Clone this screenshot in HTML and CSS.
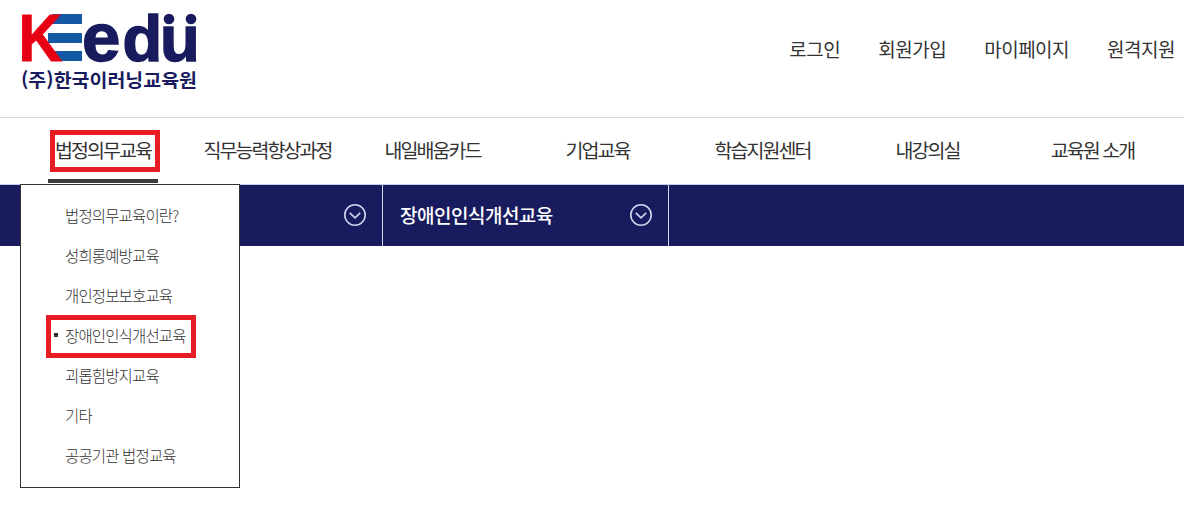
FILE: index.html
```html
<!DOCTYPE html>
<html lang="ko">
<head>
    <meta charset="UTF-8">
    <meta name="viewport" content="width=device-width, initial-scale=1.0">
    <title>(주)한국이러닝교육원</title>
    <link rel="stylesheet" href="styles.css">
</head>
<body>
    <!-- Header -->
    <header class="page-header">
        <a class="logo" href="#">
            <svg width="180" height="104" viewBox="0 -10 180 104">
                <g fill="#1558a6">
                    <rect x="31" y="4" width="30" height="10"/>
                    <rect x="27" y="23" width="34" height="10"/>
                    <rect x="34" y="41" width="27" height="10"/>
                </g>
                <text class="logo-k" transform="translate(-2.6 51) scale(0.9 1)" x="0" y="0">K</text>
                <text class="logo-edu" x="61 101.5 139" y="51"><tspan class="logo-e">e</tspan>du</text>
                <g fill="#181c5e">
                    <circle cx="148" cy="9" r="5.3"/>
                    <circle cx="170" cy="9" r="5.3"/>
                </g>
                <text class="logo-name" x="0" y="77" textLength="176" lengthAdjust="spacingAndGlyphs">(주)한국이러닝교육원</text>
            </svg>
        </a>
        <ul class="user-menu">
            <li><a href="#">로그인</a></li>
            <li><a href="#">회원가입</a></li>
            <li><a href="#">마이페이지</a></li>
            <li><a href="#">원격지원</a></li>
        </ul>
    </header>

    <!-- Main menu -->
    <nav class="main-nav">
        <ul class="nav-list">
            <li class="nav-item active">
                <a href="#"><span class="marked">법정의무교육</span></a>
                <ul class="sub-menu">
                    <li><a href="#">법정의무교육이란?</a></li>
                    <li><a href="#">성희롱예방교육</a></li>
                    <li><a href="#">개인정보보호교육</a></li>
                    <li class="current"><a href="#">장애인인식개선교육</a></li>
                    <li><a href="#">괴롭힘방지교육</a></li>
                    <li><a href="#">기타</a></li>
                    <li><a href="#">공공기관 법정교육</a></li>
                </ul>
            </li>
            <li class="nav-item"><a href="#">직무능력향상과정</a></li>
            <li class="nav-item"><a href="#">내일배움카드</a></li>
            <li class="nav-item"><a href="#">기업교육</a></li>
            <li class="nav-item"><a href="#">학습지원센터</a></li>
            <li class="nav-item"><a href="#">내강의실</a></li>
            <li class="nav-item"><a href="#">교육원 소개</a></li>
        </ul>
    </nav>

    <!-- Location bar -->
    <div class="location-bar">
        <div class="location first">
            <svg class="arrow" width="24" height="24" viewBox="0 0 24 24">
                <circle cx="12" cy="12" r="10.2"/>
                <path d="M6.8 9.8 L12 14.8 L17.2 9.8"/>
            </svg>
        </div>
        <div class="location">
            <span>장애인인식개선교육</span>
            <svg class="arrow" width="24" height="24" viewBox="0 0 24 24">
                <circle cx="12" cy="12" r="10.2"/>
                <path d="M6.8 9.8 L12 14.8 L17.2 9.8"/>
            </svg>
        </div>
    </div>
</body>
</html>
```
FILE: styles.css
```css
* {
    box-sizing: border-box;
}

body {
    margin: 0;
    min-height: 100vh;
    font-family: "Noto Sans CJK KR", "Noto Sans", sans-serif;
    color: #333;
    background: #fff;
}

ul {
    list-style: none;
    margin: 0;
    padding: 0;
}

a {
    color: inherit;
    text-decoration: none;
}

/* Header */
.page-header {
    display: flex;
    justify-content: space-between;
    height: 118px;
    padding: 0 9px 0 21px;
    border-bottom: 1px solid #d9d9d9;
}

.logo svg {
    display: block;
    overflow: visible;
}

.logo-k {
    font: bold 67px "Liberation Sans", sans-serif;
    fill: #e60013;
    stroke: #e60013;
    stroke-width: 1px;
}

.logo-edu {
    font: bold 65px "Liberation Sans", sans-serif;
    fill: #181c5e;
    stroke: #181c5e;
    stroke-width: 1.5px;
}

.logo-e {
    font-size: 69px;
}

.logo-name {
    font-size: 18.5px;
    font-weight: bold;
    fill: #181c5e;
}

.user-menu {
    display: flex;
    gap: 38px;
    padding-top: 35px;
    font-size: 19px;
    line-height: 28px;
    letter-spacing: -0.5px;
}

/* Main menu */
.main-nav {
    height: 66px;
    padding-left: 20px;
}

.nav-list {
    display: flex;
}

.nav-item {
    position: relative;
    width: 165px;
    height: 66px;
    text-align: center;
    font-size: 19.5px;
    line-height: 64px;
    letter-spacing: -1.95px;
}

.nav-item.active::after {
    content: "";
    position: absolute;
    left: 28px;
    top: 61px;
    width: 110px;
    height: 4px;
    background: #3c3c3c;
}

.marked {
    display: inline-block;
    width: 110px;
    height: 42px;
    margin: 12px 0 0 4px;
    padding-right: 3px;
    border: 5px solid #e81c24;
    line-height: 30px;
    vertical-align: top;
}

/* Drop down */
.sub-menu {
    position: absolute;
    left: 0;
    top: 66px;
    z-index: 10;
    width: 220px;
    height: 304px;
    padding: 10px 0 0 25px;
    border: 1px solid #333;
    background: #fff;
    text-align: left;
    font-size: 15.5px;
    font-weight: 300;
    letter-spacing: -0.86px;
}

.sub-menu li {
    height: 40px;
    padding-left: 19px;
    line-height: 40px;
}

.sub-menu .current {
    display: flex;
    align-items: center;
    width: 150px;
    height: 43px;
    margin: 0 0 -3px;
    padding: 0 0 3px 3px;
    border: 5px solid #e81c24;
}

.current::before {
    content: "";
    width: 4px;
    height: 4px;
    margin-right: 7px;
    background: #333;
}

/* Location bar */
.location-bar {
    display: flex;
    height: 62px;
    background: #181c5e;
    border-top: 1px solid #c9cbea;
}

.location {
    display: flex;
    align-items: center;
    justify-content: space-between;
    width: 286px;
    padding: 0 15px 2px 17px;
    border-right: 1px solid #d5d6e6;
    color: #fff;
    font-size: 19px;
    font-weight: 500;
    line-height: 26px;
    letter-spacing: -0.5px;
}

.location.first {
    justify-content: flex-end;
    width: 383px;
}

.arrow {
    fill: none;
    stroke: #d3d4ee;
    stroke-width: 1.6;
}
```
